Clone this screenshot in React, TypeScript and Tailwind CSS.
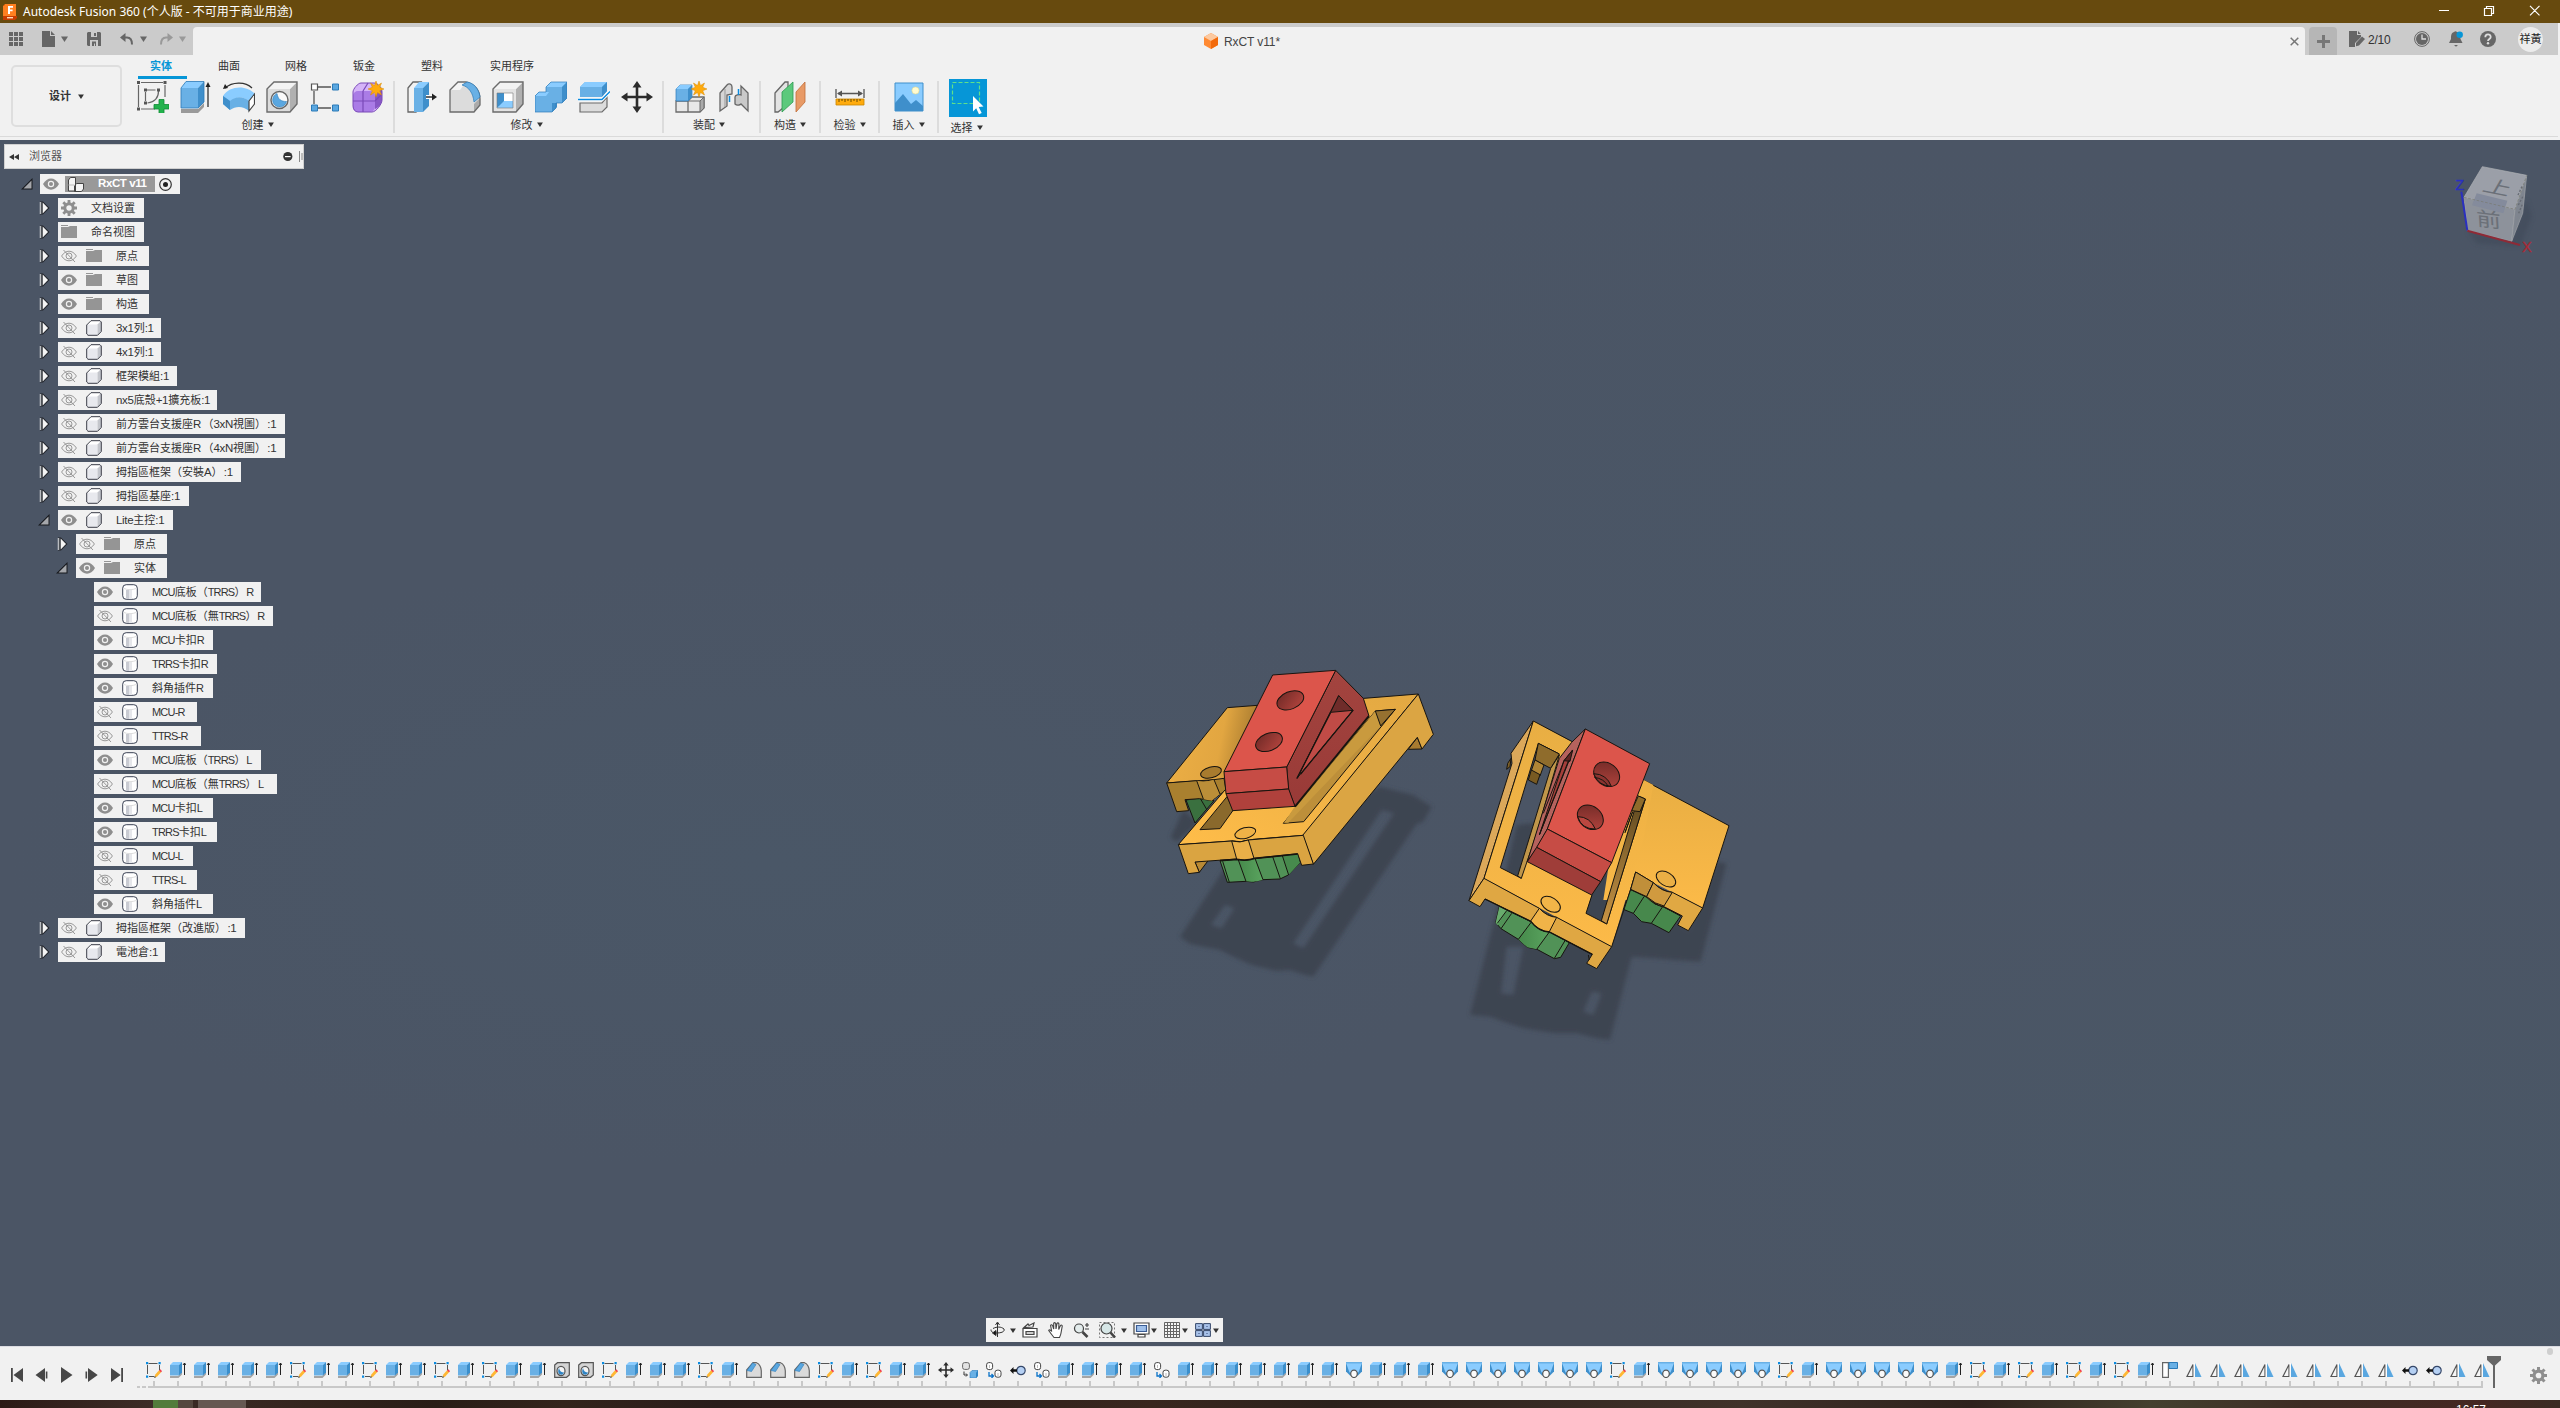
import React from "react";

const UI_FONT = "font-['Liberation_Sans','Noto_Sans_CJK_SC',sans-serif]";

type P = { pts: string; f: string; s?: string };
const Poly = ({ pts, f, s = "#17140f" }: P) => (
  <polygon points={pts} fill={f} stroke={s} strokeWidth="3" strokeLinejoin="round" />
);

const Caret = ({ className = "" }: { className?: string }) => (
  <svg className={className} width="7" height="6" viewBox="0 0 7 6" fill="currentColor">
    <path d="M0 .5h7L3.5 6z" />
  </svg>
);

/* ---------- Ribbon icons (32px) ---------- */

const R = ({ children }: { children: React.ReactNode }) => (
  <svg width="32" height="32" viewBox="0 0 32 32" fill="none">
    {children}
  </svg>
);

const IconSketch = () => (
  <R>
    <path d="M4 1.500h22M1.500 4v22M28 4v12M4 28h14M9.500 9h9M8.500 11v9M21.500 10c0 7-4 11-11 12" stroke="#666" strokeWidth="1.200" />
    <path d="M0 0h3v3H0zM26.500 0h3v3h-3zM0 26.500h3v3H0zM7 7.500h3v3H7zM20 7.500h3v3h-3zM7 20.500h3v3H7z" fill="#555" />
    <path d="M22 18.500h5v5h5v4.500h-5v4.500h-5V28h-5v-4.500h5z" fill="#22b24c" stroke="#0f8a35" strokeWidth=".8" />
  </R>
);
const IconExtrude = () => (
  <R>
    <path d="M1 28h17l6-6v4l-6 6H1z" fill="#9a9a9a" />
    <path d="M1 7h17v20H1z" fill="#69b0e5" />
    <path d="M1 7l5-6.500h18L18 7z" fill="#8accff" />
    <path d="M18 7l6-6.500V21l-6 6z" fill="#3f8fcb" />
    <path d="M1 7l5-6.500h18V21l-6 6H1z" stroke="#2b7ab8" strokeWidth=".8" />
    <path d="M28 26V3" stroke="#222" strokeWidth="1.200" />
    <path d="M25.500 6L28 1l2.500 5z" fill="#222" />
  </R>
);
const IconRevolve = () => (
  <R>
    <path d="M2 7C9 1 22 0 29 7" stroke="#333" strokeWidth="1.200" />
    <path d="M0 8l2-5 3 4z" fill="#222" />
    <path d="M0 15C7 4 24 4 32 13l-5 8c-6-6-14-6-20 0z" fill="#8accff" />
    <path d="M0 15l7 5c6-5 13-5 19 0v10c-6-5-13-5-19-1l-7-6z" fill="#69b0e5" />
    <path d="M0 15l7 5v9l-7-6z" fill="#3f8fcb" />
    <path d="M26 20l5.500-7v10L26 30z" fill="#fff" stroke="#444" strokeWidth="1.200" />
  </R>
);
const IconHole = () => (
  <R>
    <path d="M1 8l7-7h23v22l-7 8H1z" fill="#dcdcdc" />
    <path d="M24 8l7-7v22l-7 8z" fill="#b0b0b0" />
    <path d="M1 8l7-7h23l-7 7z" fill="#f3f3f3" />
    <path d="M1 8l7-7h23v22l-7 8H1z" stroke="#6b6b6b" strokeWidth="1.400" />
    <circle cx="13.500" cy="19" r="8.500" fill="#fafafa" stroke="#666" strokeWidth="1.400" />
    <path d="M11 12.500c1 6 4 8 9.500 8A7 7 0 1 1 11 12.500z" fill="#5aa7e0" stroke="#2b7ab8" strokeWidth=".6" />
  </R>
);
const IconPattern = () => (
  <R>
    <path d="M9 6h13M5 10v13M9 27h13" stroke="#555" strokeWidth="1.300" />
    <path d="M2.500 3h6v6h-6z" fill="#fff" stroke="#555" strokeWidth="1.200" />
    <path d="M23.500 3h6v6h-6zM2.500 24h6v6h-6zM23.500 24h6v6h-6z" fill="#5aa7e0" stroke="#2b7ab8" strokeWidth="1" />
  </R>
);
const Burst = () => (
  <path
    d="M24 0l1.500 4.500L29.500 2l-1.800 4.300L32 8l-4.300 1.700 1.800 4.300-4-2.500L24 16l-1.500-4.500-4 2.500 1.800-4.300L16 8l4.300-1.700L18.500 2l4 2.500z"
    fill="#ffab0d"
    stroke="#d98a00"
    strokeWidth=".5"
  />
);
const IconForm = () => (
  <R>
    <path d="M1 11c0-3 5-9 8-9h13c4 0 8 5 8 9v8c0 4-6 12-10 12H6c-3 0-5-3-5-6z" fill="#d5b4f8" />
    <rect x="1" y="10" width="22" height="21" rx="5" fill="#aa7ce6" />
    <path d="M23 12l7-4v11c0 4-4 8-7 9z" fill="#8757c4" />
    <path d="M1 20h22l6-6M11 10v21M11 10l5-8" stroke="#7a4ab8" strokeWidth="1.200" />
    <path d="M1 11c0-3 5-9 8-9h13c4 0 8 5 8 9v8c0 4-6 12-10 12H6c-3 0-5-3-5-6z" stroke="#7a4ab8" strokeWidth="1" />
    <Burst />
  </R>
);
const IconPressPull = () => (
  <R>
    <path d="M2 7l5-6h8l-5 6v24H2z" fill="#f2f2f2" stroke="#666" strokeWidth="1.300" />
    <path d="M8 7h9v24H8z" fill="#69b0e5" />
    <path d="M8 7l5-6h10l-6 6z" fill="#8accff" />
    <path d="M17 7l6-6v24l-6 6z" fill="#3f8fcb" />
    <path d="M20 16h7" stroke="#fff" strokeWidth="4" />
    <path d="M20 16h8" stroke="#222" strokeWidth="1.400" />
    <path d="M26 12.500l5 3.500-5 3.500z" fill="#222" />
  </R>
);
const IconFillet = () => (
  <R>
    <path d="M1 9l8-8h8c9 2 14 9 14 17v6l-6 7H1z" fill="#dcdcdc" />
    <path d="M1 9l8-8h8l-6 8z" fill="#f5f5f5" />
    <path d="M25 23l6-6v7l-6 7z" fill="#aaa" />
    <path d="M1 9l8-8h8c9 2 14 9 14 17v6l-6 7H1z" stroke="#6b6b6b" strokeWidth="1.300" />
    <path d="M13 4c7 2 11 8 12 17l6-5C30 8 25 2 18 1z" fill="#69b0e5" stroke="#2b7ab8" strokeWidth=".7" />
  </R>
);
const IconShell = () => (
  <R>
    <path d="M1 8l7-7h23v22l-7 8H1z" fill="#e3e3e3" />
    <path d="M24 8l7-7v22l-7 8z" fill="#b0b0b0" />
    <path d="M1 8l7-7h23l-7 7z" fill="#f3f3f3" />
    <path d="M1 8l7-7h23v22l-7 8H1z" stroke="#6b6b6b" strokeWidth="1.400" />
    <path d="M5 12h16v15H5z" fill="#fff" />
    <path d="M5 12h7v10l-7 5z" fill="#3f8fcb" />
    <path d="M5 27l7-7h9v7z" fill="#8accff" />
    <path d="M5 12h16v15H5z" stroke="#777" strokeWidth=".6" />
  </R>
);
const IconCombine = () => (
  <R>
    <path d="M0 15l4-4h7V6l5-5h16v16l-5 5h-6v5l-4 4H0z" fill="#69b0e5" />
    <path d="M0 15l4-4h10l-3 4zM11 6l5-5h16l-5 5z" fill="#8accff" />
    <path d="M27 6l5-5v16l-5 5zM17 22h5v4l-5 5z" fill="#3f8fcb" />
    <path d="M0 15l4-4h7V6l5-5h16v16l-5 5h-6v5l-4 4H0z" stroke="#2b7ab8" strokeWidth=".7" />
  </R>
);
const IconSplit = () => (
  <R>
    <path d="M2 6l5-5h22v9l-5 6H2z" fill="#69b0e5" />
    <path d="M2 6l5-5h22l-5 5z" fill="#8accff" />
    <path d="M24 6l5-5v9l-5 6z" fill="#3f8fcb" />
    <path d="M2 22h22l5-6v10l-5 5H2z" fill="#dcdcdc" stroke="#6b6b6b" strokeWidth="1.200" />
    <path d="M0 18.500h24l8-8" stroke="#fff" strokeWidth="3.500" />
    <path d="M0 18.500h24l8-8" stroke="#0a8be0" strokeWidth="1.400" />
  </R>
);
const IconMove = () => (
  <R>
    <path
      d="M16 0l4.500 6.500H17.300v8.200h8.200v-3.200L32 16l-6.500 4.500v-3.200h-8.200v8.200h3.200L16 32l-4.500-6.500h3.200v-8.200H6.500v3.200L0 16l6.500-4.500v3.200h8.200V6.500h-3.200z"
      fill="#2c2c2c"
    />
  </R>
);
const IconComponent = () => (
  <R>
    <path d="M1 20h12v11H1zM13 20l4-4h12v11l-4 4H13z" fill="#e8e8e8" stroke="#6b6b6b" strokeWidth="1.300" />
    <path d="M25 20l4-4v11l-4 4z" fill="#aaa" stroke="#6b6b6b" />
    <path d="M13 20h12" stroke="#6b6b6b" />
    <path d="M1 8l4-4h12v12l-4 4H1z" fill="#69b0e5" stroke="#2b7ab8" strokeWidth=".7" />
    <path d="M1 8l4-4h12l-4 4z" fill="#8accff" />
    <path d="M13 8l4-4v12l-4 4z" fill="#3f8fcb" />
    <Burst />
  </R>
);
const IconJoint = () => (
  <R>
    <path d="M2 12L9 4c2-2 5-1 5 2v7l-5 1v11l-7 5z" fill="#d6d6d6" stroke="#666" strokeWidth="1.300" />
    <path d="M7 8v18" stroke="#999" />
    <path d="M30 12l-7-7v9c-2-1-6 0-6 2v7c2 2 5 1 6 0l7 7z" fill="#c9c9c9" stroke="#666" strokeWidth="1.300" />
    <path d="M11.500 15v6M20.500 8v6" stroke="#0a8be0" strokeWidth="1.500" />
  </R>
);
const IconConstruct = () => (
  <R>
    <path d="M1 12L11 1h3v22L4 31H1z" fill="#e3e3e3" stroke="#666" strokeWidth="1.300" />
    <path d="M8 11l11-10v20L8 31z" fill="#5cc97c" stroke="#2f9a50" strokeWidth=".8" />
    <path d="M22 11l9-10v20l-9 10z" fill="#e89a66" stroke="#c06d38" strokeWidth=".8" />
  </R>
);
const IconMeasure = () => (
  <R>
    <path d="M2 8v9M30 8v9M4 12.500h24" stroke="#555" strokeWidth="1.300" />
    <path d="M3 12.500L8 9.500v6zM29 12.500l-5-3v6z" fill="#555" />
    <path d="M2 18h28v6H2z" fill="#ffab0d" stroke="#c98500" strokeWidth=".8" />
    <path d="M5 18v3M8 18v2M11 18v3M14 18v2M17 18v3M20 18v2M23 18v3M26 18v2" stroke="#6b4a00" />
  </R>
);
const IconInsert = () => (
  <R>
    <path d="M2 2h28v28H2z" fill="#8accff" />
    <circle cx="22.500" cy="9.500" r="3.600" fill="#fffbd0" stroke="#e0d890" strokeWidth=".6" />
    <path d="M2 22l8-9 8 10 5-4 7 6v5H2z" fill="#3f8fcb" />
    <path d="M2 2h28v28H2z" stroke="#3f8fcb" strokeWidth="1" />
  </R>
);
const IconSelect = () => (
  <svg width="38" height="38" viewBox="0 0 38 38" className="mb-[2px] bg-[#0696d7]">
    <path d="M3.500 3.500h27v21h-27z" fill="none" stroke="#5fe08a" strokeWidth="1.200" strokeDasharray="4 2" />
    <path d="M24 17l10.500 10.500-4.800.4 3 6-2.700 1.300-2.800-6L24 32.500z" fill="#fff" />
  </svg>
);

type Group = { label: string; icons: React.FC[]; width: string; labelMargin: string; last?: boolean };
const GROUPS: Group[] = [
  { label: "创建", icons: [IconSketch, IconExtrude, IconRevolve, IconHole, IconPattern, IconForm], width: "w-[265px] pr-[3px]", labelMargin: "mr-[5px]" },
  { label: "修改", icons: [IconPressPull, IconFillet, IconShell, IconCombine, IconSplit, IconMove], width: "w-[269px] pl-[2px]", labelMargin: "mr-[6px]" },
  { label: "装配", icons: [IconComponent, IconJoint], width: "w-[97px] pl-px", labelMargin: "mr-[6px]" },
  { label: "构造", icons: [IconConstruct], width: "w-[60px]", labelMargin: "" },
  { label: "检验", icons: [IconMeasure], width: "w-[59px]", labelMargin: "" },
  { label: "插入", icons: [IconInsert], width: "w-[59px]", labelMargin: "" },
  { label: "选择", icons: [IconSelect], width: "w-[57px]", labelMargin: "mr-[2px]", last: true },
];

/* ---------- Top bars ---------- */

const TitleBar = () => (
  <div className="flex h-[23px] items-center bg-[#674a0e] pl-[3px] text-white">
    <svg width="14" height="16" viewBox="0 0 14 16">
      <path d="M0 2l2-2h11v14l-2 2H0z" fill="#ff6b0a" />
      <path d="M0 2h2V0h11v12H0z" fill="#ff7f1f" />
      <path d="M0 12h14v2l-2 2H0z" fill="#c73c00" />
      <path d="M5 2h5v1.800H7v1.700h2.600v1.700H7V10H5z" fill="#fff" />
      <path d="M4 13h6v1.400H4z" fill="#ffd9b8" />
    </svg>
    <span className="ml-[6px] whitespace-nowrap font-['Noto_Sans','Noto_Sans_CJK_SC',sans-serif] text-[12px] leading-none">
      Autodesk Fusion 360 (个人版 - 不可用于商业用途)
    </span>
    <svg className="mb-[2px] ml-auto" width="102" height="12" viewBox="0 0 102 12" fill="none" stroke="#fff" strokeWidth="1.200">
      <path d="M0 5.500h10M45.500 3.500h7v7h-7zM47.500 3.500v-2h7v7h-2M91 .8l9.500 9.500M100.500.8L91 10.300" />
    </svg>
    <div className="w-[19px]" />
  </div>
);

const QuickBar = () => (
  <div className="flex h-8 w-[2558px] items-end bg-[#cbcbcb] text-[#666]">
    <div className="flex h-8 w-[193px] items-center pl-[9px]">
      <svg width="14" height="14" viewBox="0 0 14 14" fill="currentColor">
        <path d="M0 0h4v4H0zM5 0h4v4H5zM10 0h4v4h-4zM0 5h4v4H0zM5 5h4v4H5zM10 5h4v4h-4zM0 10h4v4H0zM5 10h4v4H5zM10 10h4v4h-4z" />
      </svg>
      <svg className="ml-[19px]" width="13" height="16" viewBox="0 0 13 16" fill="currentColor">
        <path d="M0 0h8v5h5v11H0zM9 0l4 4H9z" />
      </svg>
      <Caret className="ml-[6px]" />
      <svg className="ml-[19px]" width="14" height="14" viewBox="0 0 14 14">
        <path d="M0 1l1-1h12l1 1v13H1l-1-1z" fill="#666" />
        <path d="M4 0h6v5H4zM3 8h8v6H3z" fill="#cbcbcb" />
        <path d="M7 1h2v3H7zM5 9.500h4V14H8v-2.500H7V14H5z" fill="#666" />
      </svg>
      <svg className="ml-[19px]" width="13" height="12" viewBox="0 0 13 12" fill="none">
        <path d="M2 4.500h5c3.500 0 5 2.500 5 7" stroke="#666" strokeWidth="2" />
        <path d="M0 4.500L5.500 0v9z" fill="#666" />
      </svg>
      <Caret className="ml-[7px]" />
      <svg className="ml-[13px]" width="13" height="12" viewBox="0 0 13 12" fill="none">
        <path d="M11 4.500H6C2.500 4.500 1 7 1 11.500" stroke="#999" strokeWidth="2" />
        <path d="M13 4.500L7.500 0v9z" fill="#999" />
      </svg>
      <Caret className="ml-[6px] text-[#999]" />
    </div>
    <div className="flex h-7 w-[2112px] items-center rounded-t-[4px] bg-[#f1f1f1] pr-[6px]">
      <div className="ml-[1011px] flex items-center">
        <svg width="14" height="16" viewBox="0 0 15 16" preserveAspectRatio="none">
          <path d="M0 4l7.500-4L15 4v8l-7.500 4L0 12z" fill="#ff8a33" />
          <path d="M0 4l7.500-4L15 4 7.500 8z" fill="#fcc9a0" />
          <path d="M7.500 8L15 4v8l-7.500 4z" fill="#f26a0c" />
        </svg>
        <span className="ml-[6px] mt-[2px] text-[12px] leading-none tracking-[-0.100px] text-[#444]">RxCT v11*</span>
      </div>
      <svg className="ml-auto" width="9" height="9" viewBox="0 0 9 9" stroke="#777" strokeWidth="1.500">
        <path d="M.7.7l7.600 7.600M8.300.7L.7 8.300" />
      </svg>
    </div>
    <div className="ml-1 flex h-7 w-7 items-center justify-center rounded-t-[4px] bg-[#b6b6b6]">
      <svg width="13" height="13" viewBox="0 0 13 13" fill="#777">
        <path d="M5 0h3v5h5v3H8v5H5V8H0V5h5z" />
      </svg>
    </div>
    <div className="flex h-8 flex-1 items-center pl-3">
      <svg width="16" height="16" viewBox="0 0 16 16">
        <path d="M0 0h8v4h4v2l-6 6v4H0zM9 0l3 3H9z" fill="#666" />
        <path d="M7 12l6-6.500 3 2.500-6 6.500-3 .8z" fill="#666" />
      </svg>
      <span className="ml-[3px] mt-px w-[46px] text-[12px] leading-none tracking-[-0.200px] text-[#333]">2/10</span>
      <svg width="16" height="16" viewBox="0 0 16 16" fill="none">
        <circle cx="8" cy="8" r="7.400" stroke="#666" />
        <circle cx="8" cy="8" r="6" fill="#666" />
        <path d="M8 3.500V8h4" stroke="#ddd" strokeWidth="1.300" />
      </svg>
      <svg className="ml-[19px]" width="14" height="16" viewBox="0 0 14 16">
        <path d="M5 1c1-1 2-1 3 0 3 1 3.500 4 3.500 7l2 4H0l2-4c0-3 0-6 3-7z" fill="#666" />
        <path d="M5 14h4l-2 1.800z" fill="#666" />
        <circle cx="10.700" cy="3.700" r="3.200" fill="#0696d7" />
      </svg>
      <svg className="ml-[17px]" width="16" height="16" viewBox="0 0 16 16" fill="none">
        <circle cx="8" cy="8" r="8" fill="#666" />
        <path d="M5.300 6.200C5.300 2.500 10.700 2.500 10.700 6c0 2-2.700 2-2.700 4" stroke="#ddd" strokeWidth="1.800" />
        <circle cx="8" cy="12.300" r="1.200" fill="#ddd" />
      </svg>
      <div className="ml-[22px] flex h-[25px] w-[25px] items-center justify-center rounded-full bg-[#ececec]">
        <span className="whitespace-nowrap pt-px text-[11px] leading-none text-[#222]">祥黃</span>
      </div>
    </div>
  </div>
);

const TABS = [
  { t: "曲面", w: "w-[67px]" },
  { t: "网格", w: "w-[68px]" },
  { t: "钣金", w: "w-[68px]" },
  { t: "塑料", w: "w-[69px]" },
  { t: "实用程序", w: "w-[69px]" },
];

const Ribbon = () => (
  <div className="flex h-[85px] bg-[#f1f1f1]">
    <div className="flex h-[82px] w-[2558px] border-b border-[#dadada]">
      <div className="ml-[11px] mt-[10px] flex h-[62px] w-[111px] items-center rounded-[5px] border-2 border-[#dedede] pl-9 text-[11px] font-bold text-[#333]">
        设计
        <Caret className="ml-[7px] h-[5px] w-[6px]" />
      </div>
      <div className="ml-[8px] flex flex-col">
        <div className="flex h-6 text-[11px] leading-[23px] text-[#333]">
          <div className="ml-2 h-6 w-[49px] border-b-[3px] border-[#0696d7] pl-[12px] font-bold text-[#0696d7]">实体</div>
          <div className="w-[31px]" />
          {TABS.map((x) => (
            <div key={x.t} className={`${x.w} whitespace-nowrap`}>
              {x.t}
            </div>
          ))}
        </div>
        <div className="flex pt-[2px]">
          {GROUPS.map((g) => (
            <div key={g.label} className={`${g.width} flex h-[52px] ${g.last ? "" : "border-r-2 border-[#dcdcdc]"}`}>
              <div className="-mt-[2px] flex flex-1 flex-col items-center">
                <div className="flex h-[40px] items-center pb-[2px] pt-[1px]">
                  {g.icons.map((Icon, i) => (
                    <div key={i} className="flex w-[43px] justify-center">
                      <Icon />
                    </div>
                  ))}
                </div>
                <div className={`${g.labelMargin} flex items-center pt-px text-[11px] leading-[16px] text-[#333]`}>
                  {g.label}
                  <Caret className="mb-[2px] ml-1 h-[5px] w-[6px]" />
                </div>
              </div>
            </div>
          ))}
        </div>
      </div>
    </div>
  </div>
);

/* ---------- Browser tree ---------- */

const Eye = ({ on }: { on: boolean }) =>
  on ? (
    <svg width="16" height="12" viewBox="0 0 16 12">
      <path d="M0 6c4-7.500 12-7.500 16 0-4 7.500-12 7.500-16 0z" fill="#8e8e8e" />
      <circle cx="8" cy="6" r="3.200" fill="#f1f1f1" />
      <circle cx="8" cy="6" r="2" fill="#8e8e8e" />
    </svg>
  ) : (
    <svg width="16" height="12" viewBox="0 0 16 12" fill="none" stroke="#8e8e8e" strokeWidth=".9">
      <path d="M.6 6c4-6.400 10.800-6.400 14.800 0-4 6.400-10.800 6.400-14.800 0zM2.500 0L14 12" />
      <circle cx="8" cy="6" r="3" />
    </svg>
  );

const Folder = () => (
  <svg width="16" height="14" viewBox="0 0 16 14" fill="#959595">
    <path d="M0 0h7v1H0zM0 2h7l2-1h7v12H0z" />
  </svg>
);
const Cube = () => (
  <svg width="16" height="16" viewBox="0 0 16 16">
    <path d="M.7 4.500l3.800-3.800h10.800v10.500l-3.800 4.100H.7z" fill="#fff" />
    <path d="M1 4.500h10.500V15H1z" fill="#e8e9ee" />
    <path d="M11.500 4.500L15 1v10.300L11.500 15z" fill="#c4c6cc" />
    <path d="M1.700 4L5 .7h9l1.300 1.300v9.500l-3.800 3.800H2L.7 14V5z" fill="none" stroke="#3b3d48" />
  </svg>
);
const Cyl = () => (
  <svg width="16" height="16" viewBox="0 0 16 16">
    <rect x=".7" y=".7" width="14.600" height="14.600" rx="3.500" fill="#fff" stroke="#3b4254" />
    <path d="M4 6h3v9H4z" fill="#c9cbd2" />
    <path d="M7 6h3v9H7z" fill="#e6e7eb" />
    <path d="M2 4.500c3 1.500 9 1.500 12 0" fill="none" stroke="#ddd" />
  </svg>
);
const Gear = ({ size }: { size: number }) => (
  <svg width={size} height={size} viewBox="0 0 16 16" fill="none" stroke="#8e8e8e">
    <circle cx="8" cy="8" r="4.200" strokeWidth="3" />
    <path d="M8 0v3M8 13v3M0 8h3M13 8h3M2.300 2.300l2.200 2.200M11.500 11.500l2.200 2.200M13.700 2.300l-2.200 2.200M4.500 11.500l-2.200 2.200" strokeWidth="2.800" />
  </svg>
);

const ArrowClosed = () => (
  <svg className="ml-px" width="11" height="14" viewBox="0 0 11 14">
    <path d="M1 .5h3L10.500 7 4 13.500H1z" fill="#22252b" />
    <path d="M.7 1h1.600v12H.7z" fill="#b9bcc0" />
    <path d="M3.700 1.500L9 7l-5.300 5.500z" fill="#f4f4f4" />
  </svg>
);
const ArrowOpen = () => (
  <svg width="12" height="12" viewBox="0 0 12 12">
    <path d="M0 11.500L11.500 0v11.500z" fill="#17191d" />
    <path d="M2.500 10.500l8-8v8z" fill="#a5a7ab" />
  </svg>
);

/* Splits a label so Latin runs can be tightened independently of Han runs. */
const Label = ({ text, tight }: { text: string; tight?: boolean }) => (
  <>
    {(text.match(/[\x21-\x7e ]+|[^\x21-\x7e ]+/g) || []).map((run, i) => (
      <span key={i} className={/[\x21-\x7e]/.test(run) ? (tight ? "text-[11px] tracking-[-0.800px]" : "text-[11.500px] tracking-[-0.300px]") : ""}>
        {run}
      </span>
    ))}
  </>
);

type Row = [level: 1 | 2 | 3, arrow: "c" | "o" | "", icon: "gear" | "folder" | "cube" | "cyl", eye: 0 | 1 | -1, text: string, width: string];
const ROWS: Row[] = [
  [1, "c", "gear", -1, "文档设置", "w-[86px]"],
  [1, "c", "folder", -1, "命名视图", "w-[86px]"],
  [1, "c", "folder", 0, "原点", "w-[91px]"],
  [1, "c", "folder", 1, "草图", "w-[91px]"],
  [1, "c", "folder", 1, "构造", "w-[91px]"],
  [1, "c", "cube", 0, "3x1列:1", "w-[103px]"],
  [1, "c", "cube", 0, "4x1列:1", "w-[103px]"],
  [1, "c", "cube", 0, "框架模組:1", "w-[119px]"],
  [1, "c", "cube", 0, "nx5底殼+1擴充板:1", "w-[159px]"],
  [1, "c", "cube", 0, "前方雲台支援座R （3xN視圖） :1", "w-[227px]"],
  [1, "c", "cube", 0, "前方雲台支援座R （4xN視圖） :1", "w-[227px]"],
  [1, "c", "cube", 0, "拇指區框架（安裝A） :1", "w-[183px]"],
  [1, "c", "cube", 0, "拇指區基座:1", "w-[131px]"],
  [1, "o", "cube", 1, "Lite主控:1", "w-[115px]"],
  [2, "c", "folder", 0, "原点", "w-[91px]"],
  [2, "o", "folder", 1, "实体", "w-[91px]"],
  [3, "", "cyl", 1, "MCU底板（TRRS） R", "w-[167px]"],
  [3, "", "cyl", 0, "MCU底板（無TRRS） R", "w-[179px]"],
  [3, "", "cyl", 1, "MCU卡扣R", "w-[119px]"],
  [3, "", "cyl", 1, "TRRS卡扣R", "w-[123px]"],
  [3, "", "cyl", 1, "斜角插件R", "w-[119px]"],
  [3, "", "cyl", 0, "MCU-R", "w-[103px]"],
  [3, "", "cyl", 0, "TTRS-R", "w-[107px]"],
  [3, "", "cyl", 1, "MCU底板（TRRS） L", "w-[167px]"],
  [3, "", "cyl", 0, "MCU底板（無TRRS）  L", "w-[183px]"],
  [3, "", "cyl", 1, "MCU卡扣L", "w-[119px]"],
  [3, "", "cyl", 1, "TRRS卡扣L", "w-[123px]"],
  [3, "", "cyl", 0, "MCU-L", "w-[99px]"],
  [3, "", "cyl", 0, "TTRS-L", "w-[103px]"],
  [3, "", "cyl", 1, "斜角插件L", "w-[119px]"],
  [1, "c", "cube", 0, "拇指區框架（改進版） :1", "w-[187px]"],
  [1, "c", "cube", 0, "電池倉:1", "w-[107px]"],
];

const INDENT = { 1: "pl-[38px]", 2: "pl-[56px]", 3: "pl-[74px]" };

const TreeRow = ({ row }: { row: Row }) => {
  const [level, arrow, icon, eye, text, width] = row;
  return (
    <div className={`flex h-5 items-center ${INDENT[level]}`}>
      <div className="w-5 shrink-0">{arrow === "c" ? <ArrowClosed /> : arrow === "o" ? <ArrowOpen /> : null}</div>
      <div className={`${width} flex h-5 items-center bg-[#f1f1f1] pl-[3px]`}>
        {eye >= 0 && (
          <div className="w-[25px] shrink-0">
            <Eye on={eye === 1} />
          </div>
        )}
        <div className="w-[30px] shrink-0">
          {icon === "gear" ? <Gear size={16} /> : icon === "folder" ? <Folder /> : icon === "cube" ? <Cube /> : <Cyl />}
        </div>
        <span className={`whitespace-pre text-[11px] leading-5 text-[#333] ${text.length > 10 ? "[word-spacing:-1.5px]" : ""}`}>
          <Label text={text} tight={level === 3} />
        </span>
      </div>
    </div>
  );
};

const Browser = () => (
  <div className="absolute left-0 top-1 w-[304px]">
    <div className="ml-1 flex h-[25px] w-[300px] items-center border border-[#d0d0d0] bg-[#f1f1f1] pl-[4px]">
      <svg width="10" height="6" viewBox="0 0 10 6" fill="#333">
        <path d="M5 0v6L0 3zM10 0v6L5 3z" />
      </svg>
      <span className="ml-[10px] text-[11px] leading-none text-[#555]">浏览器</span>
      <svg className="ml-auto" width="20" height="11" viewBox="0 0 20 11">
        <circle cx="4.800" cy="5.500" r="4.600" fill="#333" />
        <path d="M2 5h5.600v1.200H2z" fill="#fff" />
        <path d="M16 0h1v11h-1zM18.500 2h1v7h-1z" fill="#888" />
      </svg>
    </div>
    <div className="mt-[5px] flex flex-col gap-1">
      <div className="flex h-5 items-center pl-[21px]">
        <div className="w-[19px]">
          <ArrowOpen />
        </div>
        <div className="flex h-5 w-[140px] items-center bg-[#f1f1f1] pl-[3px]">
          <Eye on />
          <div className="ml-[6px] flex h-4 w-[90px] items-center bg-[#999] pl-[3px]">
            <svg width="16" height="15" viewBox="0 0 16 15" fill="#f4f4f4" stroke="#444">
              <path d="M.5 3l2-2.500h5V14H.5zM6.500 9l2-2.500h7V12l-2 2.500h-7z" />
              <path d="M.5 8h6" stroke="#bbb" />
            </svg>
            <span className="ml-[14px] text-[11.500px] font-bold leading-none tracking-[-0.400px] text-white">RxCT v11</span>
          </div>
          <svg className="ml-1" width="13" height="13" viewBox="0 0 13 13">
            <circle cx="6.500" cy="6.500" r="5.800" fill="none" stroke="#333" strokeWidth="1.200" />
            <circle cx="6.500" cy="6.500" r="2.500" fill="#222" />
          </svg>
        </div>
      </div>
      {ROWS.map((r, i) => (
        <TreeRow key={i} row={r} />
      ))}
    </div>
  </div>
);

/* ---------- 3D viewport ---------- */

const L = ({ d, w = 3 }: { d: string; w?: number }) => <path d={d} fill="none" stroke="#17140f" strokeWidth={w} />;
const Hole = ({ x, y, rx, ry, r, f }: { x: number; y: number; rx: number; ry: number; r: number; f: string }) => (
  <ellipse cx={x} cy={y} rx={rx} ry={ry} transform={`rotate(${r} ${x} ${y})`} fill={f} stroke="#17140f" strokeWidth="3" />
);

const Defs = () => (
  <defs>
    <filter id="soft" x="-20%" y="-20%" width="140%" height="140%">
      <feGaussianBlur stdDeviation="6" />
    </filter>
    <linearGradient id="hole" x1="0" y1="0" x2="1" y2="1">
      <stop offset="0" stopColor="#6e2926" />
      <stop offset="1" stopColor="#b8463f" />
    </linearGradient>
    <linearGradient id="plate" x1="0" y1="0" x2="0" y2="1">
      <stop offset="0" stopColor="#e8ae43" />
      <stop offset="1" stopColor="#fcba48" />
    </linearGradient>
    <linearGradient id="backPlate" x1="0" y1="0" x2="1" y2=".2">
      <stop offset="0" stopColor="#eeb045" />
      <stop offset=".65" stopColor="#e2a641" />
      <stop offset="1" stopColor="#a87b30" />
    </linearGradient>
    <linearGradient id="frontTop" x1="1" y1="0" x2="0" y2="1">
      <stop offset="0" stopColor="#e2a842" />
      <stop offset="1" stopColor="#ffbd49" />
    </linearGradient>
    <linearGradient id="greenCurve" x1="0" y1="0" x2="1" y2="0">
      <stop offset="0" stopColor="#468a4b" />
      <stop offset="1" stopColor="#5aa45f" />
    </linearGradient>
    <linearGradient id="wall" x1="0" y1="0" x2="0" y2="1">
      <stop offset="0" stopColor="#5e4820" />
      <stop offset="1" stopColor="#c99545" />
    </linearGradient>
    <linearGradient id="redSide" x1="0" y1="0" x2="0" y2="1">
      <stop offset="0" stopColor="#a3443f" />
      <stop offset="1" stopColor="#993a37" />
    </linearGradient>
  </defs>
);

const LeftModel = () => (
  <g transform="translate(1140 500) scale(.33333)">
    <g filter="url(#soft)">
      <path
        fillRule="evenodd"
        fill="#3e4551"
        d="M720 440L820 465 875 500 850 545 830 552 520 1010 495 1005 450 990 410 993 335 975 280 950 240 930 190 920 150 912 120 890 250 690 480 560zM725 510L762 520 490 925 460 910zM255 795L283 805 245 865 213 855z"
      />
      <path fill="#3e4551" d="M130 510L175 550 110 605 92 592z" />
    </g>
    <Poly pts="138,480 180,474 222,482 165,549" f="#3a703f" />
    <L d="M180 474L200 508" />
    <Poly pts="80,429 262,203 352,196 340,400 250,470 222,419" f="url(#backPlate)" />
    <Poly pts="80,429 170,422 190,424 222,419 252,415 258,450 215,482 190,478 178,476 135,479 146,512 110,515" f="#a9802f" />
    <path d="M170 422Q196 428 222 419L240 462 215 482 190 478z" fill="#bb8e38" />
    <L d="M170 422L190 477M222 419L240 462" />
    <Hole x={213} y={397} rx={32} ry={16} r={-15} f="#a87b2e" />
    <Poly pts="240,662 290,658 320,661 345,655 473,642 480,668 445,705 420,717 368,719 340,726 318,724 262,727" f="#519257" />
    <path d="M295 660Q325 664 345 655L369 719Q345 728 318 724z" fill="url(#greenCurve)" />
    <path d="M427 647L473 642 480 668 446 705z" fill="#478a4d" />
    <L d="M248 664L268 727M295 660L318 724M345 655L369 719M398 650L421 716M427 647L446 705" />
    <Poly pts="165,666 205,661 178,697" f="#b98a35" />
    <Poly pts="805,328 832,292 846,327" f="#a87b30" />
    <Poly pts="115,614 255,450 660,176 835,162 490,586 340,598 305,605 275,603" f="url(#frontTop)" />
    <Poly pts="488,586 835,162 880,283 846,327 832,292 520,673" f="#dba543" />
    <path
      d="M115 614L275 603Q300 610 325 600L490 586 520 672 485 676 473 641 345 655Q320 665 290 657L165 666 178 697 145 701z"
      fill="#daa441"
      stroke="#17140f"
      strokeWidth="3"
    />
    <path d="M275 603Q300 610 325 600L342 655Q320 663 290 657z" fill="#eaaf48" />
    <L d="M275 603L290 657M325 600L342 655M275 603Q300 610 325 600" />
    <path d="M240 662L290 658Q320 664 345 655L473 642" stroke="#17140f" strokeWidth="5" fill="none" />
    <Poly pts="180,569 240,566 280,510 261,470" f="#8a692c" />
    <Poly pts="430,550 491,545 766,208 706,213" f="#bd8f3a" />
    <path d="M722 258L706 213 470 497 462 503 432 548 445 548z" fill="#c99a3e" />
    <Poly pts="706,213 766,208 722,258" f="#967130" />
    <Hole x={316} y={579} rx={32} ry={16} r={-15} f="#efb247" />
    <Poly pts="587,91 670,175 687,228 465,500 445,447 440,381" f="url(#redSide)" />
    <path d="M687 228L465 500" stroke="#17140f" strokeWidth="6" />
    <Poly pts="398,105 587,91 440,381 252,395" f="#dc554b" />
    <Poly pts="252,395 440,381 446,447 258,461" f="#c64c45" />
    <Poly pts="258,461 446,447 465,499 278,512" f="#b0413c" />
    <Poly pts="596,167 639,211 471,415" f="#c04b46" />
    <Poly pts="596,167 639,211 572,217" f="#6f2c2a" />
    <L d="M639 211L482 402M572 217L471 415" w={4} />
    <Hole x={451} y={181} rx={42} ry={26} r={-22} f="url(#hole)" />
    <Hole x={387} y={306} rx={42} ry={26} r={-22} f="url(#hole)" />
  </g>
);

const RightModel = () => (
  <g transform="translate(1440 560) scale(.33333)">
    <g filter="url(#soft)">
      <path
        fillRule="evenodd"
        fill="#3e4551"
        d="M90 945L165 650 230 375 290 368 600 560 745 690 830 485 860 490 782 785 700 780 640 775 575 770 510 1020 470 1015 410 1000 345 1000 250 985 190 965 150 950zM200 740L250 740 220 885 183 880zM455 875L485 880 460 945 430 935z"
      />
    </g>
    <Poly pts="572,565 620,590 645,612 670,620 722,648 687,698 634,670 605,665 580,640 550,628" f="#47884c" />
    <L d="M612 590L580 640M668 620L634 670" />
    <path d="M572 568L620 590Q645 615 672 620L722 646" fill="none" stroke="#17140f" strokeWidth="5" />
    <polygon points="610,240 867,377 788,624 697,577 640,548 587,516 560,600 490,600 540,280" fill="url(#plate)" />
    <L d="M610 240L867 377L788 624" />
    <path
      d="M587 516L640 548Q665 575 697 577L788 624 745 692 713 675 727 648 672 620Q645 615 620 590L572 568z"
      fill="#e0a843"
      stroke="#17140f"
      strokeWidth="3"
    />
    <path d="M587 516L640 548 620 590 572 568z" fill="#c08f3a" stroke="#17140f" strokeWidth="3" />
    <path d="M640 548Q665 575 697 577L672 618Q645 613 620 590z" fill="#d09a3f" stroke="#17140f" strokeWidth="3" />
    <Hole x={678} y={537} rx={32} ry={20} r={32} f="#eaaf45" />
    <Poly pts="178,620 272,664 300,690 328,694 388,728 362,772 343,776 291,748 262,742 235,718 183,686 167,668" f="#519257" />
    <path d="M275 664L300 690 328 694 291 748 262 742 235 718z" fill="url(#greenCurve)" />
    <path d="M178 620L200 632 172 676 167 668z" fill="#68ab6d" />
    <L d="M200 632L172 670M215 640L183 686M275 665L235 718M328 696L290 748M375 722L343 775" />
    <Poly pts="213,175 203,190 200,208 210,200" f="#7d6028" />
    <Poly pts="280,63 213,160 216,190 87,602 132,535" f="#dba85a" />
    <path
      fillRule="evenodd"
      fill="url(#plate)"
      d="M280 63L395 125 640 255 610 420 515 740 132 535zM295 130L358 162 244 535 181 503zM540 290L616 297 500 672 438 640 455 585z"
    />
    <L d="M280 63L410 132M280 63L132 535M515 740L572 568M295 130L358 162M295 130L181 503L244 535M438 640L500 672L616 297L595 288M438 640L456 585" />
    <Poly pts="616,297 500,672 484,662 582,335" f="url(#wall)" />
    <Poly pts="595,288 616,297 600,335 575,332" f="#8f6b2b" />
    <Poly pts="578,335 555,398 572,350" f="#6f5420" />
    <Poly pts="295,130 358,162 332,205 285,180" f="#8f6c2c" />
    <Poly pts="285,180 312,195 300,228 274,212" f="#b08536" />
    <Poly pts="274,210 300,224 290,253 265,240" f="#785a22" />
    <Poly pts="358,165 332,205 233,528 244,535 290,400" f="#c0964a" />
    <path
      d="M132 535L298 625Q320 650 350 652L515 740 470 806 440 790 457 763 328 696Q295 694 272 664L135 597 120 620 87 602z"
      fill="#dfa743"
      stroke="#17140f"
      strokeWidth="3"
    />
    <path d="M298 625Q320 650 350 652L328 695Q295 694 272 663z" fill="#f0b348" stroke="#17140f" strokeWidth="3" />
    <L d="M445 765L448 780" />
    <path d="M135 597L272 664Q295 694 328 696L457 763" stroke="#17140f" strokeWidth="4" fill="none" />
    <Hole x={332} y={613} rx={32} ry={20} r={32} f="#f2b548" />
    <Poly pts="436,87 395,127 358,175 262,485 292,441 322,387" f="#b5625d" />
    <Poly pts="398,150 372,182 298,405" f="#a43f3a" />
    <Poly pts="398,150 372,182 390,184" f="#5e2422" />
    <L d="M372 182L310 340M388 180L298 405" />
    <Poly pts="436,87 629,191 515,488 322,387" f="#dc554b" />
    <Poly pts="322,387 515,488 482,545 290,442" f="#c64c45" />
    <Poly pts="290,442 482,545 455,585 262,485" f="#9f3d39" />
    <Hole x={500} y={223} rx={42} ry={33} r={38} f="url(#hole)" />
    <path d="M461 221Q500 222 514 259Q475 258 461 221z" fill="#8a3430" stroke="#17140f" strokeWidth="3" />
    <path d="M463 232Q492 236 504 258" fill="none" stroke="#17140f" strokeWidth="3" />
    <Hole x={451} y={352} rx={42} ry={33} r={38} f="url(#hole)" />
    <path d="M413 350Q450 350 466 387Q425 388 413 350z" fill="#bb4740" stroke="#17140f" strokeWidth="3" />
  </g>
);

const ViewCube = () => (
  <g transform="translate(2260 -140) scale(.33333)">
    <path d="M622 692L755 724 800 600 815 650 780 740 650 730z" fill="#3c4656" opacity=".5" filter="url(#soft)" />
    <polygon points="667,500 800,526 765,628 612,592" fill="#9b9fa8" stroke="#b0b3b6" strokeWidth="2" />
    <polygon points="612,592 765,628 755,724 622,692" fill="#8d929b" stroke="#a3a6aa" strokeWidth="2" />
    <polygon points="800,526 788,640 755,724 765,628" fill="#7f858f" stroke="#a3a6aa" strokeWidth="2" />
    <path d="M650 580L742 602 730 640 636 616z" fill="#848b9c" />
    <path d="M612 592L765 628 800 526" fill="none" stroke="#77786f" strokeWidth="2" strokeDasharray="8 5" />
    <text x="0" y="0" transform="matrix(1 .2 -.35 .62 664 572)" fontSize="80" fill="#6b7078" className="font-['Noto_Sans_CJK_SC',sans-serif]">
      上
    </text>
    <text x="0" y="0" transform="matrix(1 .12 .05 .8 650 676)" fontSize="74" fill="#6b7078" className="font-['Noto_Sans_CJK_SC',sans-serif]">
      前
    </text>
    <path d="M774 585l14-30M776 640l12-30M775 615l14-26" stroke="#666b73" strokeWidth="4" strokeDasharray="6 5" />
    <path d="M604 575L622 692" stroke="#2a2fc0" strokeWidth="6" />
    <path d="M622 692L780 735" stroke="#8e2a36" strokeWidth="6" />
    <text x="586" y="571" fontSize="44" fill="#2a2fc0" stroke="#2a2fc0" className="font-['Liberation_Sans',sans-serif]">
      Z
    </text>
    <text x="786" y="755" fontSize="44" fill="#a82a35" stroke="#a82a35" className="font-['Liberation_Sans',sans-serif]">
      X
    </text>
  </g>
);

const NAV: { ml: string; node: React.ReactNode }[] = [
  {
    ml: "ml-[3px]",
    node: (
      <svg width="17" height="16" viewBox="0 0 17 16" fill="none" stroke="#333">
        <path d="M8.500 1v14M6.500 3l2-3 2 3" />
        <path d="M4 6.500c4-2 8-2 11 .5 1 3-3 4-8 4M2 7.500c0 2 1 2.500 2 3" />
        <path d="M7 8.500L3.500 11 7 13.500z" fill="#111" />
      </svg>
    ),
  },
  { ml: "ml-[4px]", node: <Caret className="h-[5px] w-[6px]" /> },
  {
    ml: "ml-[6px]",
    node: (
      <svg width="16" height="16" viewBox="0 0 16 16" fill="#fff" stroke="#444" strokeWidth="1.200">
        <path d="M1 6.500h14v8.500H1z" />
        <path d="M4 9.500h8v3H4z" fill="#ccc" />
        <path d="M2 5.500L6 2l1 1.500L12 1l-1 4z" />
      </svg>
    ),
  },
  {
    ml: "ml-[10px]",
    node: (
      <svg width="16" height="16" viewBox="0 0 16 16" fill="#fff" stroke="#444" strokeWidth="1.100">
        <path d="M6 15.500C4 13 2.500 11 .7 8.500c.6-1.200 2-.5 3 1L2.600 3.500c.4-1.200 1.600-1 2 .2L5.700 7V1.500c.4-1.200 1.700-1 2 0L8 7l1-5.500c.5-1 1.700-.8 1.900.3L10.700 7.500l1.800-4c.7-.9 1.900-.3 1.700.8L13 11c-.3 2-1 3-1.500 4.500z" />
      </svg>
    ),
  },
  {
    ml: "ml-[9px]",
    node: (
      <svg width="17" height="16" viewBox="0 0 17 16" fill="none" stroke="#444">
        <circle cx="6" cy="6.500" r="4.500" fill="#e3ecec" strokeWidth="1.200" />
        <path d="M9.500 10l5 5" strokeWidth="2.600" />
        <path d="M14 1v4M12 3h4M12 7h4" strokeWidth="1.200" />
      </svg>
    ),
  },
  {
    ml: "ml-[9px]",
    node: (
      <svg width="17" height="16" viewBox="0 0 17 16" fill="none" stroke="#444">
        <path d="M.5.5h15v15H.5z" strokeDasharray="2 2" stroke="#777" />
        <circle cx="7.500" cy="6.500" r="5.500" fill="#d6e6e6" strokeWidth="1.200" />
        <path d="M11.500 10.500l4.500 5" strokeWidth="2.600" />
      </svg>
    ),
  },
  { ml: "ml-[5px]", node: <Caret className="h-[5px] w-[6px]" /> },
  {
    ml: "ml-[6px]",
    node: (
      <svg width="17" height="16" viewBox="0 0 17 16" fill="#fff" stroke="#444" strokeWidth="1.200">
        <path d="M1 1h15v11H1z" />
        <path d="M3.500 3.500h10v6h-10z" fill="#9fc0ea" stroke="#3a5c94" />
        <path d="M5 12.500h7v2.500H5z" />
      </svg>
    ),
  },
  { ml: "ml-[1px]", node: <Caret className="h-[5px] w-[6px]" /> },
  {
    ml: "ml-[7px]",
    node: (
      <svg width="16" height="16" viewBox="0 0 16 16" fill="#f4f4f4" stroke="#666">
        <path d="M.5.5h15v15H.5zM.5 3.500h15M.5 6.500h15M.5 9.500h15M.5 12.500h15M3.500.5v15M6.500.5v15M9.500.5v15M12.500.5v15" />
      </svg>
    ),
  },
  { ml: "ml-[2px]", node: <Caret className="h-[5px] w-[6px]" /> },
  {
    ml: "ml-[7px]",
    node: (
      <svg width="16" height="14" viewBox="0 0 16 14" fill="#a9c3ea" stroke="#36486a">
        <path d="M.6.6h6.800v5.800H.6zM8.600.6h6.800v5.800H8.600zM.6 7.600h6.800v5.800H.6zM8.600 7.600h6.800v5.800H8.600z" />
        <path d="M3 3.500h2M11 3.500h2M3 10.500h2M11 10.500h2" stroke="#6d85b0" />
      </svg>
    ),
  },
  { ml: "ml-[2px]", node: <Caret className="h-[5px] w-[6px]" /> },
];

const Viewport = () => (
  <div className="relative h-[1206px] overflow-hidden bg-[#4b5565] bg-[radial-gradient(ellipse_at_30%_60%,#4a5767_0%,transparent_30%),radial-gradient(ellipse_at_75%_30%,#4a5666_0%,transparent_30%),radial-gradient(ellipse_at_90%_85%,#4a5766_0%,transparent_25%)]">
    <svg className="absolute left-0 top-0" width="2560" height="1206" viewBox="0 0 2560 1206">
      <Defs />
      <LeftModel />
      <RightModel />
      <ViewCube />
    </svg>
    <Browser />
    <div className="absolute bottom-1 left-[986px] flex h-6 w-[237px] items-center bg-[#f1f1f1] text-[#333]">
      {NAV.map((n, i) => (
        <div key={i} className={`${n.ml} shrink-0`}>
          {n.node}
        </div>
      ))}
    </div>
  </div>
);

/* ---------- Timeline (16px icons) ---------- */

const T = ({ children }: { children: React.ReactNode }) => (
  <svg width="16" height="16" viewBox="0 0 16 16" fill="none">
    {children}
  </svg>
);

const FEATURES: Record<string, React.ReactNode> = {
  S: (
    <T>
      <path d="M2.500 1.500h9M1.500 3v9M13.500 3v5M3 14.500h5" stroke="#555" />
      <path d="M0 0h2.200v2.200H0zM12.500 0h2.200v2.200h-2.200zM0 13.500h2.200v2.200H0z" fill="#0a8be0" />
      <path d="M8.500 15.500l.8-3 4-4.500 2 2-4.300 4.700z" fill="#ffb733" />
      <path d="M13 8.500l1.500-1.300 1.500 2-1 1z" fill="#f03d4e" />
      <path d="M8 16l.7-2.200 1.500 1.500z" fill="#555" />
    </T>
  ),
  E: (
    <T>
      <path d="M0 14h8l4-4v2.500L8.500 16H0z" fill="#a5a5a5" />
      <path d="M0 3h9v10.500H0z" fill="#69b0e5" />
      <path d="M0 3l3-3h9L9 3z" fill="#8accff" />
      <path d="M9 3l3-3v10.500l-3 3z" fill="#3a8ecb" />
      <path d="M14.500 13V1M13 3l1.500-2L16 3" stroke="#222" />
    </T>
  ),
  H: (
    <T>
      <path d="M.7 3L3.500.7h11.800V13l-2.800 2.300H.7z" fill="#d5d5d5" stroke="#555" strokeWidth="1.200" />
      <ellipse cx="7" cy="9" rx="4" ry="4.600" fill="#f4f4f4" stroke="#555" strokeWidth="1.200" />
      <path d="M5 6c.5 3 2.500 4.500 5 4.500C9.500 13 6 13.500 4.500 11c-.7-2 0-4 .5-5z" fill="#2f84c4" />
    </T>
  ),
  C: (
    <T>
      <path d="M.7 8L7 .7h3.500c3 1 4.800 5 4.800 8v6.600H.7z" fill="#dadada" stroke="#666" strokeWidth="1.200" />
      <path d="M1 8.500L6.500 1 10 2.500 5.500 9.500z" fill="#5aa7e0" stroke="#2b7ab8" strokeWidth=".6" />
    </T>
  ),
  V: (
    <T>
      <path
        d="M8 0l2.700 3.500H8.800v3.700h3.700V5.300L16 8l-3.500 2.700V8.800H8.800v3.700h1.900L8 16l-2.700-3.500h1.900V8.800H3.500v1.900L0 8l3.500-2.700v1.900h3.700V3.500H5.300z"
        fill="#2c2c2c"
      />
    </T>
  ),
  K: (
    <T>
      <rect x=".6" y=".6" width="6.800" height="6.800" rx="2" fill="#e3e3e3" stroke="#666" />
      <path d="M2 9.500V13h3M4 11.500L5.500 13 4 14.500" stroke="#333" />
      <path d="M8 10.500L10 8.500h6v5L14 16H8z" fill="#69b0e5" stroke="#2b7ab8" strokeWidth=".6" />
      <path d="M14 10.500l2-2v5L14 16z" fill="#2f84c4" />
    </T>
  ),
  J: (
    <T>
      <rect x=".6" y=".6" width="6" height="7" rx="2.200" fill="#fff" stroke="#444" />
      <rect x="9" y="8.200" width="6" height="7" rx="2.200" fill="#fff" stroke="#444" />
      <path d="M3 10v4h4M5.500 12L7.500 14l-2 2" stroke="#0a72c8" strokeWidth="1.300" />
      <path d="M12 11v3M3.500 3v3" stroke="#bbb" />
    </T>
  ),
  A: (
    <T>
      <circle cx="11" cy="8.500" r="4.200" fill="#b5d0f3" stroke="#36486a" strokeWidth="1.200" />
      <path d="M0 8.500L3.500 5v2.300H7v2.400H3.500V12z" fill="#111" />
    </T>
  ),
  L: (
    <T>
      <path d="M0 0h16v9.500l-4 4H4l-4-4z" fill="#3f8fcb" />
      <path d="M0 1h16l-3.500 9.500h-9z" fill="#8accff" />
      <path d="M0 0h16v1.500H0z" fill="#69b0e5" />
      <ellipse cx="8" cy="11.800" rx="3.300" ry="3.700" fill="#fafafa" stroke="#555" strokeWidth="1.200" />
    </T>
  ),
  F: (
    <T>
      <path d="M.6.6h5.800v14.800H.6z" fill="#fff" stroke="#666" strokeWidth="1.200" />
      <path d="M7 .5h8.500v6H7z" fill="#69b0e5" stroke="#2b7ab8" />
    </T>
  ),
  M: (
    <T>
      <path d="M7 2.500v12H1z" stroke="#555" strokeWidth="1.200" fill="#f6f6f6" />
      <path d="M9 1l6.500 14H9z" fill="#5aa7e0" />
      <path d="M8.200 1v14" stroke="#fff" />
    </T>
  ),
};

const SEQUENCE =
  "SEEEEESEESEESESEEHHSEEESECCCSESEEVKJAJEEEEJEEEEEEELEEELLLLLLLSELLLLLSELLLLLESESESESEFMMMMMMMMMAAMM";

const Timeline = () => (
  <div className="flex h-[54px] border-t border-[#dcdce2] bg-[#f1f1f1]">
    <div className="flex h-[54px] w-[142px] shrink-0 items-center pl-[10px] pt-[2px]">
      <svg width="114" height="16" viewBox="0 0 114 16" fill="#474747">
        <path d="M1 1h1.800v14H1zM13 1v14L3.500 8zM35 1v14l-9.500-7zM35.800 4.500h1.600v7h-1.600zM51 0v16l11.500-8zM75.500 4.500h1.600v7h-1.600zM78 1v14l9.700-7zM101 1v14l9.700-7zM111.200 1h1.800v14h-1.800z" />
      </svg>
    </div>
    <div className="relative shrink-0 pt-[15px]">
      <div className="flex">
        {SEQUENCE.split("").map((k, i) => (
          <div key={i} className="flex w-6 shrink-0 flex-col items-center">
            {FEATURES[k]}
            <div className="mt-[3px] h-[5px] w-[2px] bg-[#c8c8c8]" />
          </div>
        ))}
      </div>
      <div className="flex h-[2px]">
        <div className="-ml-[5px] w-[3px] bg-[#c8c8c8]" />
        <div className="ml-[2px] w-1 bg-[#c8c8c8]" />
        <div className="ml-[2px] w-[2335px] bg-[#c8c8c8]" />
      </div>
      <svg className="absolute -right-[7px] top-[9px]" width="14" height="32" viewBox="0 0 14 32" fill="#666">
        <path d="M0 0h14v4L8 9.500V32H6V9.500L0 4z" />
      </svg>
    </div>
    <div className="flex flex-1 items-center pl-[36px] pt-[3px]">
      <Gear size={17} />
      <div className="mb-[48px] h-[7px] w-[6px] rounded-full bg-[#cfcfcf]" />
    </div>
  </div>
);

const Taskbar = () => (
  <div className="flex h-2 overflow-hidden bg-[linear-gradient(90deg,#2c1a16_0%,#3d2c27_6%,#33241d_12%,#2a1d17_17%,#33241c_22%,#291c1a_28%,#38261e_45%,#2c201b_52%,#40322a_68%,#2e211c_77%,#44402f_84%,#3d2c24_90%,#452722_97%,#3a2b23_100%)]">
    <div className="ml-[153px] h-2 w-[25px] bg-[#527c3b]" />
    <div className="h-2 w-[15px] bg-[#55473f]" />
    <div className="ml-[5px] h-2 w-[48px] bg-[#665852]" />
    <span className="ml-auto mr-[74px] mt-[3px] text-[12px] leading-[14px] text-white">16:57</span>
  </div>
);

export default function App() {
  return (
    <div className={`flex h-[1408px] w-[2560px] flex-col overflow-hidden bg-[#f1f1f1] ${UI_FONT}`}>
      <TitleBar />
      <QuickBar />
      <Ribbon />
      <Viewport />
      <Timeline />
      <Taskbar />
    </div>
  );
}
